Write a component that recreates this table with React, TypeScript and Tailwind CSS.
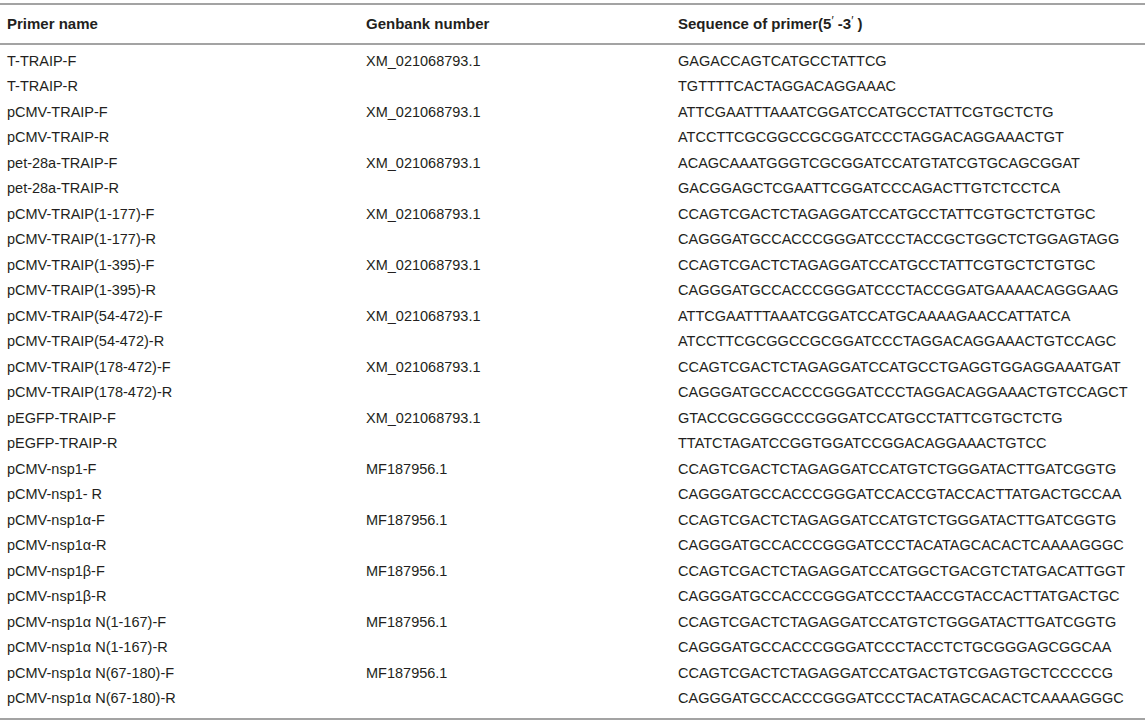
import React from 'react'

type Row = {
  name: string
  genbank?: string
  seq: string
}

const rows: Row[] = [
  { name: 'T-TRAIP-F', genbank: 'XM_021068793.1', seq: 'GAGACCAGTCATGCCTATTCG' },
  { name: 'T-TRAIP-R', seq: 'TGTTTTCACTAGGACAGGAAAC' },
  { name: 'pCMV-TRAIP-F', genbank: 'XM_021068793.1', seq: 'ATTCGAATTTAAATCGGATCCATGCCTATTCGTGCTCTG' },
  { name: 'pCMV-TRAIP-R', seq: 'ATCCTTCGCGGCCGCGGATCCCTAGGACAGGAAACTGT' },
  { name: 'pet-28a-TRAIP-F', genbank: 'XM_021068793.1', seq: 'ACAGCAAATGGGTCGCGGATCCATGTATCGTGCAGCGGAT' },
  { name: 'pet-28a-TRAIP-R', seq: 'GACGGAGCTCGAATTCGGATCCCAGACTTGTCTCCTCA' },
  { name: 'pCMV-TRAIP(1-177)-F', genbank: 'XM_021068793.1', seq: 'CCAGTCGACTCTAGAGGATCCATGCCTATTCGTGCTCTGTGC' },
  { name: 'pCMV-TRAIP(1-177)-R', seq: 'CAGGGATGCCACCCGGGATCCCTACCGCTGGCTCTGGAGTAGG' },
  { name: 'pCMV-TRAIP(1-395)-F', genbank: 'XM_021068793.1', seq: 'CCAGTCGACTCTAGAGGATCCATGCCTATTCGTGCTCTGTGC' },
  { name: 'pCMV-TRAIP(1-395)-R', seq: 'CAGGGATGCCACCCGGGATCCCTACCGGATGAAAACAGGGAAG' },
  { name: 'pCMV-TRAIP(54-472)-F', genbank: 'XM_021068793.1', seq: 'ATTCGAATTTAAATCGGATCCATGCAAAAGAACCATTATCA' },
  { name: 'pCMV-TRAIP(54-472)-R', seq: 'ATCCTTCGCGGCCGCGGATCCCTAGGACAGGAAACTGTCCAGC' },
  { name: 'pCMV-TRAIP(178-472)-F', genbank: 'XM_021068793.1', seq: 'CCAGTCGACTCTAGAGGATCCATGCCTGAGGTGGAGGAAATGAT' },
  { name: 'pCMV-TRAIP(178-472)-R', seq: 'CAGGGATGCCACCCGGGATCCCTAGGACAGGAAACTGTCCAGCT' },
  { name: 'pEGFP-TRAIP-F', genbank: 'XM_021068793.1', seq: 'GTACCGCGGGCCCGGGATCCATGCCTATTCGTGCTCTG' },
  { name: 'pEGFP-TRAIP-R', seq: 'TTATCTAGATCCGGTGGATCCGGACAGGAAACTGTCC' },
  { name: 'pCMV-nsp1-F', genbank: 'MF187956.1', seq: 'CCAGTCGACTCTAGAGGATCCATGTCTGGGATACTTGATCGGTG' },
  { name: 'pCMV-nsp1- R', seq: 'CAGGGATGCCACCCGGGATCCACCGTACCACTTATGACTGCCAA' },
  { name: 'pCMV-nsp1α-F', genbank: 'MF187956.1', seq: 'CCAGTCGACTCTAGAGGATCCATGTCTGGGATACTTGATCGGTG' },
  { name: 'pCMV-nsp1α-R', seq: 'CAGGGATGCCACCCGGGATCCCTACATAGCACACTCAAAAGGGC' },
  { name: 'pCMV-nsp1β-F', genbank: 'MF187956.1', seq: 'CCAGTCGACTCTAGAGGATCCATGGCTGACGTCTATGACATTGGT' },
  { name: 'pCMV-nsp1β-R', seq: 'CAGGGATGCCACCCGGGATCCCTAACCGTACCACTTATGACTGC' },
  { name: 'pCMV-nsp1α N(1-167)-F', genbank: 'MF187956.1', seq: 'CCAGTCGACTCTAGAGGATCCATGTCTGGGATACTTGATCGGTG' },
  { name: 'pCMV-nsp1α N(1-167)-R', seq: 'CAGGGATGCCACCCGGGATCCCTACCTCTGCGGGAGCGGCAA' },
  { name: 'pCMV-nsp1α N(67-180)-F', genbank: 'MF187956.1', seq: 'CCAGTCGACTCTAGAGGATCCATGACTGTCGAGTGCTCCCCCG' },
  { name: 'pCMV-nsp1α N(67-180)-R', seq: 'CAGGGATGCCACCCGGGATCCCTACATAGCACACTCAAAAGGGC' },
]

export default function App() {
  return (
    <div className="w-[1145px] h-[723px] bg-white pt-[3px] text-[#231f20] font-['Liberation_Sans',Arial,sans-serif]">
      <div className="border-t-2 border-b-2 border-[#a3a3a3]">
        {/* header */}
        <div className="grid grid-cols-[359px_312px_1fr] pl-[7px] h-[40px] pt-[1px] items-center border-b-2 border-[#a3a3a3] text-[15px] font-bold whitespace-nowrap">
          <div>Primer name</div>
          <div>Genbank number</div>
          <div>
            Sequence of primer(5<span className="relative -top-[4px] text-[12px] font-normal">′</span> -3<span className="relative -top-[4px] text-[12px] font-normal">′</span> )
          </div>
        </div>
        {/* body */}
        <div className="pt-[4px] pb-[6px]">
          {rows.map((r, i) => (
            <div key={i} className="grid grid-cols-[359px_312px_1fr] pl-[7px] h-[25.5px] items-center text-[14.5px] whitespace-nowrap">
              <div>{r.name}</div>
              <div>{r.genbank ?? ''}</div>
              <div>{r.seq}</div>
            </div>
          ))}
        </div>
      </div>
    </div>
  )
}
